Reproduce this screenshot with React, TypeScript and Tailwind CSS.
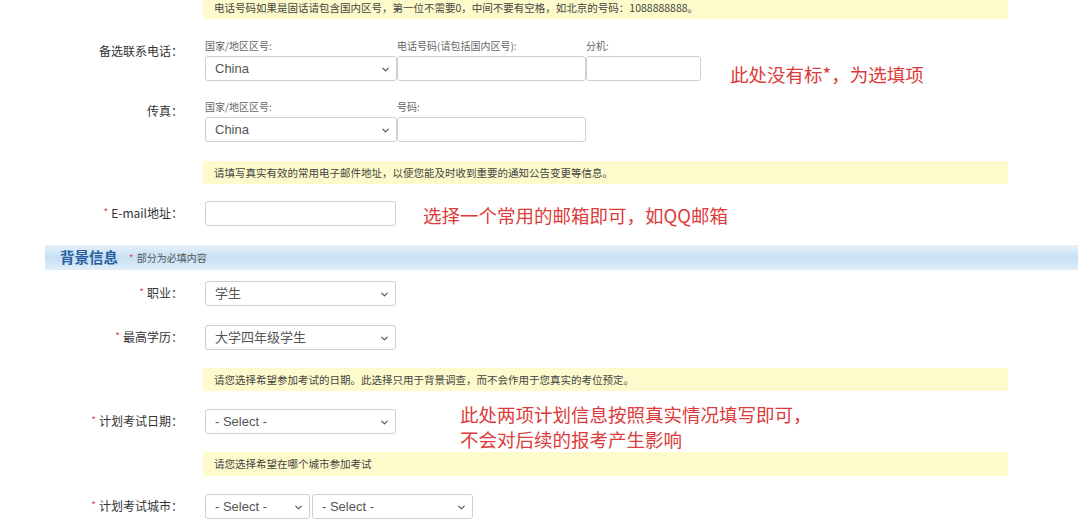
import React from "react";
import { ChevronDown } from "lucide-react";

const cjk = { fontFamily: '"Noto Sans CJK SC", "Noto Sans", sans-serif' };
const latin = { fontFamily: '"Liberation Sans", "Noto Sans CJK SC", sans-serif' };

function Select({ value, w }: { value: string; w: string }) {
  return (
    <div
      className={`relative h-[25px] ${w} rounded-[3px] border border-[#cfcfcf] bg-white flex items-center pl-[9px] text-[13px] text-[#555]`}
      style={latin}
    >
      <span className="leading-none">{value}</span>
      <ChevronDown
        size={11}
        strokeWidth={2.6}
        className="absolute right-[5px] top-[7px] text-[#555]"
      />
    </div>
  );
}

function Input({ w }: { w: string }) {
  return <div className={`h-[25px] ${w} rounded-[3px] border border-[#cfcfcf] bg-white`} />;
}

function Label({ text, star, pt }: { text: string; star?: boolean; pt?: string }) {
  return (
    <div className={`w-[183px] shrink-0 text-right text-[12px] leading-[16px] text-[#333] ${pt ?? ""}`} style={cjk}>
      {star && <span className="text-[#e64545] text-[10px] mr-[3px] relative -top-[2px]">*</span>}
      {text}
    </div>
  );
}

function Tip({ text, h, mt }: { text: string; h: string; mt: string }) {
  return (
    <div
      className={`ml-[203px] w-[805px] ${h} ${mt} bg-[#fdfbcb] flex items-center pl-[11px] text-[10.5px] text-[#444]`}
      style={cjk}
    >
      {text}
    </div>
  );
}

const Note = ({ children, cls }: { children: React.ReactNode; cls: string }) => (
  <div className={`text-[18.5px] leading-[25px] text-[#dc3b3b] whitespace-nowrap ${cls}`} style={cjk}>
    {children}
  </div>
);

export default function App() {
  return (
    <div className="w-[1080px] h-[525px] bg-white overflow-hidden" style={cjk}>
      <div
        className="ml-[203px] w-[805px] h-[19px] bg-[#fdfbcb] pl-[11px] text-[10.5px] leading-[16px] text-[#444]"
        style={cjk}
      >
        电话号码如果是固话请包含国内区号，第一位不需要0，中间不要有空格，如北京的号码：1088888888。
      </div>

      {/* 备选联系电话 */}
      <div className="mt-[20px] flex h-[42px]">
        <Label text="备选联系电话：" pt="pt-[4px]" />
        <div className="ml-[22px] flex h-[42px] items-start">
          <div className="flex flex-col">
            <div className="h-[17px] text-[10px] leading-[14px] text-[#666]">国家/地区区号:</div>
            <Select value="China" w="w-[192px]" />
          </div>
          <div className="flex flex-col">
            <div className="h-[17px] text-[10px] leading-[14px] text-[#666]">电话号码(请包括国内区号):</div>
            <Input w="w-[189px]" />
          </div>
          <div className="flex flex-col">
            <div className="h-[17px] text-[10px] leading-[14px] text-[#666]">分机:</div>
            <Input w="w-[115px]" />
          </div>
          <Note cls="ml-[29px] mt-[23px] h-[19px]">此处没有标*，为选填项</Note>
        </div>
      </div>

      {/* 传真 */}
      <div className="mt-[19px] flex h-[42px]">
        <Label text="传真：" pt="pt-[3px]" />
        <div className="ml-[22px] flex">
          <div className="flex flex-col">
            <div className="h-[17px] text-[10px] leading-[14px] text-[#666]">国家/地区区号:</div>
            <Select value="China" w="w-[192px]" />
          </div>
          <div className="flex flex-col">
            <div className="h-[17px] text-[10px] leading-[14px] text-[#666]">号码:</div>
            <Input w="w-[189px]" />
          </div>
        </div>
      </div>

      <Tip mt="mt-[19px]" h="h-[23px]" text="请填写真实有效的常用电子邮件地址，以便您能及时收到重要的通知公告变更等信息。" />

      {/* Email */}
      <div className="mt-[17px] flex items-center h-[25px]">
        <Label text="E-mail地址：" star />
        <div className="ml-[22px] flex items-center h-[25px]">
          <Input w="w-[191px]" />
          <Note cls="ml-[27px] mt-[4px]">选择一个常用的邮箱即可，如QQ邮箱</Note>
        </div>
      </div>

      {/* 背景信息 band */}
      <div className="mt-[19px] ml-[45px] w-[1033px] h-[25px] bg-gradient-to-b from-[#e6f1fa] via-[#c6e0f4] to-[#e0eef9] flex items-center pl-[15px]">
        <span className="text-[14.5px] font-bold text-[#2a5f9f] leading-none" style={cjk}>
          背景信息
        </span>
        <span className="ml-[11px] text-[10px] text-[#555] leading-none">
          <span className="text-[#e64545] mr-[3px]">*</span>部分为必填内容
        </span>
      </div>

      {/* 职业 */}
      <div className="mt-[11px] flex items-center h-[25px]">
        <Label text="职业：" star />
        <div className="ml-[22px]">
          <Select value="学生" w="w-[191px]" />
        </div>
      </div>

      {/* 最高学历 */}
      <div className="mt-[19px] flex items-center h-[25px]">
        <Label text="最高学历：" star />
        <div className="ml-[22px]">
          <Select value="大学四年级学生" w="w-[191px]" />
        </div>
      </div>

      <Tip mt="mt-[18px]" h="h-[23px]" text="请您选择希望参加考试的日期。此选择只用于背景调查，而不会作用于您真实的考位预定。" />

      {/* 计划考试日期 */}
      <div className="mt-[18px] flex items-center h-[25px] relative z-10">
        <Label text="计划考试日期：" star />
        <div className="ml-[22px] flex items-start h-[25px]">
          <Select value="- Select -" w="w-[191px]" />
          <Note cls="ml-[64px] -mt-[7px]">
            此处两项计划信息按照真实情况填写即可，
            <br />
            不会对后续的报考产生影响
          </Note>
        </div>
      </div>

      <Tip mt="mt-[18px]" h="h-[24px]" text="请您选择希望在哪个城市参加考试" />

      {/* 计划考试城市 */}
      <div className="mt-[18px] flex items-center h-[25px]">
        <Label text="计划考试城市：" star />
        <div className="ml-[22px] flex gap-[2px]">
          <Select value="- Select -" w="w-[105px]" />
          <Select value="- Select -" w="w-[161px]" />
        </div>
      </div>
    </div>
  );
}
